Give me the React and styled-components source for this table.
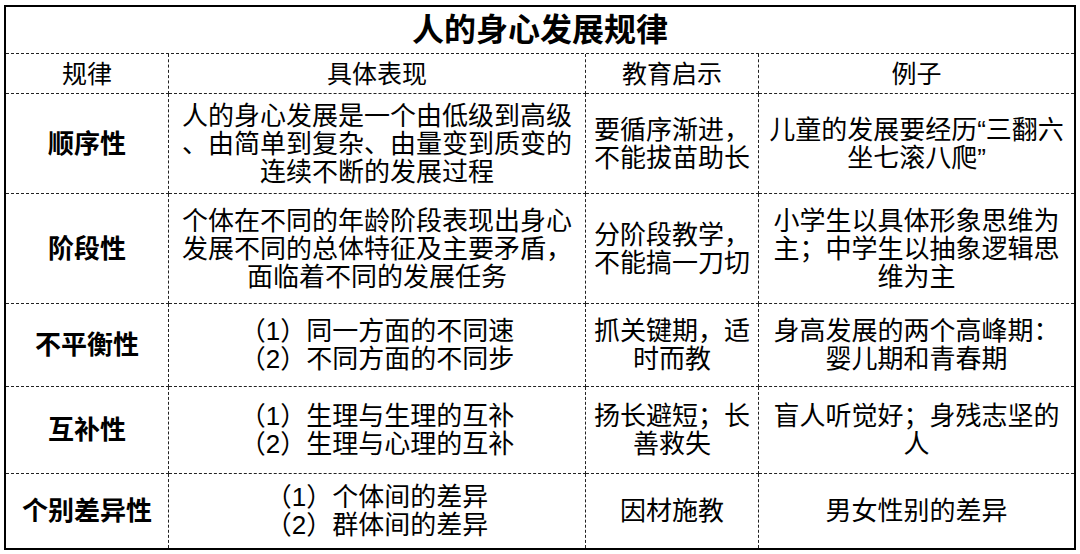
import styled, { createGlobalStyle } from "styled-components";

const GlobalStyle = createGlobalStyle`
  html, body {
    margin: 0;
    padding: 0;
    background: #fff;
  }
  body {
    font-family: "Liberation Sans", "Noto Sans CJK SC", sans-serif;
    color: #000;
  }
`;

const rows = [
  {
    name: "顺序性",
    height: 100,
    detail: ["人的身心发展是一个由低级到高级", "、由简单到复杂、由量变到质变的", "连续不断的发展过程"],
    lesson: ["要循序渐进，", "不能拔苗助长"],
    example: ["儿童的发展要经历“三翻六", "坐七滚八爬”"],
  },
  {
    name: "阶段性",
    height: 110,
    detail: ["个体在不同的年龄阶段表现出身心", "发展不同的总体特征及主要矛盾，", "面临着不同的发展任务"],
    lesson: ["分阶段教学，", "不能搞一刀切"],
    example: ["小学生以具体形象思维为", "主；中学生以抽象逻辑思", "维为主"],
  },
  {
    name: "不平衡性",
    height: 83,
    detail: ["（1）同一方面的不同速", "（2）不同方面的不同步"],
    lesson: ["抓关键期，适", "时而教"],
    example: ["身高发展的两个高峰期：", "婴儿期和青春期"],
  },
  {
    name: "互补性",
    height: 87,
    detail: ["（1）生理与生理的互补", "（2）生理与心理的互补"],
    lesson: ["扬长避短；长", "善救失"],
    example: ["盲人听觉好；身残志坚的", "人"],
  },
  {
    name: "个别差异性",
    height: 74,
    detail: ["（1）个体间的差异", "（2）群体间的差异"],
    lesson: ["因材施教"],
    example: ["男女性别的差异"],
    last: true,
  },
];

const App = () => {
  const renderLines = (lines) =>
    lines.map((line, i) => <Line key={i}>{line}</Line>);

  return (
    <>
      <GlobalStyle />
      <Frame>
        <Table>
          <colgroup>
            <col style={{ width: 163 }} />
            <col style={{ width: 417 }} />
            <col style={{ width: 173 }} />
            <col style={{ width: 315 }} />
          </colgroup>
          <tbody>
            <Row $h={47}>
              <TitleCell colSpan={4} $lastCol>人的身心发展规律</TitleCell>
            </Row>
            <Row $h={40}>
              <HeadCell>规律</HeadCell>
              <HeadCell>具体表现</HeadCell>
              <HeadCell>教育启示</HeadCell>
              <HeadCell $lastCol>例子</HeadCell>
            </Row>
            {rows.map((row) => (
              <Row key={row.name} $h={row.height}>
                <NameCell $lastRow={row.last}>{row.name}</NameCell>
                <Cell $lastRow={row.last}>{renderLines(row.detail)}</Cell>
                <Cell $lastRow={row.last}>{renderLines(row.lesson)}</Cell>
                <Cell $lastRow={row.last} $lastCol>{renderLines(row.example)}</Cell>
              </Row>
            ))}
          </tbody>
        </Table>
      </Frame>
    </>
  );
};

const Frame = styled.div`
  margin: 5px 0 0 4px;
  width: 1068px;
  border: 2px solid #000;
`;

const Table = styled.table`
  width: 1068px;
  table-layout: fixed;
  border-collapse: separate;
  border-spacing: 0;
`;

const Row = styled.tr`
  height: ${(p) => p.$h}px;
`;

const Cell = styled.td`
  padding: 0;
  text-align: center;
  vertical-align: middle;
  font-size: 26px;
  line-height: 28px;
  border-right: ${(p) => (p.$lastCol ? "none" : "1px dashed #222")};
  border-bottom: ${(p) => (p.$lastRow ? "none" : "1px dashed #222")};
  box-sizing: border-box;
`;

const NameCell = styled(Cell)`
  font-weight: bold;
`;

const HeadCell = styled(Cell)`
  font-size: 25px;
`;

const TitleCell = styled(Cell)`
  font-size: 32px;
  font-weight: bold;
  line-height: 40px;
`;

const Line = styled.span`
  display: block;
  white-space: nowrap;
`;

export default App;
